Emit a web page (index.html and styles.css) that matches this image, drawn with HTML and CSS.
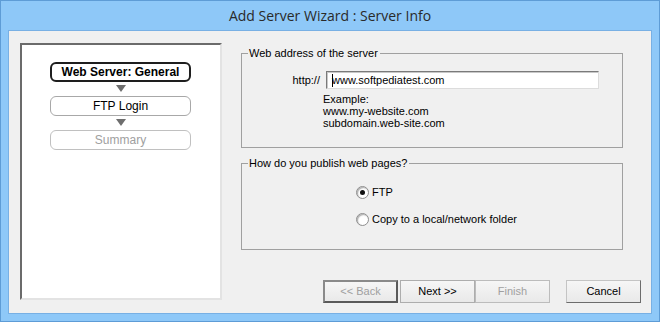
FILE: index.html
```html
<!DOCTYPE html>
<html lang="en">

<head>
    <meta charset="UTF-8">
    <title>Add Server Wizard : Server Info</title>
    <link rel="stylesheet" href="styles.css">
</head>

<body>
    <div class="window">
        <div class="titlebar">Add Server Wizard : Server Info</div>

        <div class="client">
            <!-- wizard steps -->
            <div class="steps">
                <div class="step step-active">Web Server: General</div>
                <div class="step-arrow"></div>
                <div class="step">FTP Login</div>
                <div class="step-arrow"></div>
                <div class="step step-disabled">Summary</div>
            </div>

            <div class="main">
                <fieldset class="group group-address">
                    <legend>Web address of the server</legend>
                    <div class="url-row">
                        <label class="url-label">http://</label>
                        <div class="textbox"><span class="caret"></span>www.softpediatest.com</div>
                    </div>
                    <div class="example">
                        Example:<br>
                        www.my-website.com<br>
                        subdomain.web-site.com
                    </div>
                </fieldset>

                <fieldset class="group group-publish">
                    <legend>How do you publish web pages?</legend>
                    <div class="radio-row radio-first">
                        <span class="radio radio-checked"></span>
                        <span class="radio-label">FTP</span>
                    </div>
                    <div class="radio-row">
                        <span class="radio"></span>
                        <span class="radio-label">Copy to a local/network folder</span>
                    </div>
                </fieldset>

                <div class="buttons">
                    <div class="btn btn-back">&lt;&lt; Back</div>
                    <div class="btn btn-next">Next &gt;&gt;</div>
                    <div class="btn btn-finish">Finish</div>
                    <div class="btn btn-cancel">Cancel</div>
                </div>
            </div>
        </div>
    </div>
</body>

</html>
```

FILE: styles.css
```css
* {
    margin: 0;
    padding: 0;
    box-sizing: border-box;
}

body {
    font-family: 'Liberation Sans', Arial, sans-serif;
    font-size: 11px;
    color: #000;
    background: #8ec8f8;
}

.window {
    width: 660px;
    height: 322px;
    border: 1px solid #5e9cd6;
    background: #8ec8f8;
}

.titlebar {
    height: 29px;
    line-height: 29px;
    text-align: center;
    font-family: 'Open Sans', sans-serif;
    font-size: 14px;
    color: #2a2a2a;
}

.client {
    height: 284px;
    margin: 0 7px;
    background: #f0f0f0;
    border: 1px solid #78b0e4;
    padding: 12px 0 0 11px;
    display: flex;
}

/* Steps panel */
.steps {
    width: 202px;
    height: 257px;
    background: #fff;
    border: 2px solid;
    border-color: #6b6b6b #e3e3e3 #e3e3e3 #6b6b6b;
    padding: 17px 0 0 28px;
    display: flex;
    flex-direction: column;
    align-items: flex-start;
}

.step {
    width: 141px;
    height: 20px;
    line-height: 18px;
    text-align: center;
    font-size: 12px;
    border: 1px solid #a8a8a8;
    border-radius: 6px;
    background: #fff;
}

.step-active {
    border: 2px solid #1e1e1e;
    line-height: 16px;
    font-weight: bold;
}

.step-disabled {
    color: #a0a0a0;
    border-color: #c0c0c0;
}

.step-arrow {
    width: 0;
    height: 0;
    margin: 3px 0 4px 66px;
    border-top: 7px solid #6e6e6e;
    border-left: 5px solid transparent;
    border-right: 5px solid transparent;
}

/* Right side */
.main {
    flex: 1;
    margin-left: 19px;
    padding-top: 4px;
    display: flex;
    flex-direction: column;
}

.group {
    width: 382px;
    border: 1px solid #a0a0a0;
    padding: 0;
}

.group legend {
    margin-left: 6px;
    padding: 0 2px 0 1px;
    line-height: 13px;
}

.group-address {
    height: 101px;
}

.group-publish {
    height: 93px;
    margin-top: 9px;
}

.url-row {
    display: flex;
    align-items: center;
    margin-top: 11px;
}

.url-label {
    width: 78px;
    text-align: right;
}

.textbox {
    position: relative;
    width: 273px;
    height: 18px;
    margin-left: 6px;
    background: #fff;
    border: 1px solid;
    border-color: #7a7a7a #dcdcdc #dcdcdc #7a7a7a;
    box-shadow: inset 1px 1px 0 #c8c8c8;
    padding-left: 5px;
    line-height: 16px;
}

.caret {
    position: absolute;
    left: 5px;
    top: 2px;
    width: 1px;
    height: 13px;
    background: #000;
}

.example {
    margin: 4px 0 0 81px;
    line-height: 12px;
}

.radio-row {
    display: flex;
    align-items: center;
    height: 16px;
    margin: 11px 0 0 114px;
}

.radio-first {
    margin-top: 14px;
}

.radio {
    position: relative;
    width: 13px;
    height: 13px;
    border-radius: 50%;
    border: 1px solid #8e8e8e;
    background: radial-gradient(circle at 60% 60%, #ffffff 40%, #e6e6e6 100%);
    box-shadow: inset 1px 1px 1px #b0b0b0;
}

.radio-checked::after {
    content: "";
    position: absolute;
    left: 3px;
    top: 3px;
    width: 5px;
    height: 5px;
    border-radius: 50%;
    background: #111;
}

.radio-label {
    margin-left: 3px;
}

/* Buttons */
.buttons {
    display: flex;
    margin-top: 30px;
    padding-left: 82px;
}

.btn {
    width: 75px;
    height: 23px;
    line-height: 21px;
    text-align: center;
    background: linear-gradient(#f6f6f6, #e9e9e9);
    border: 1px solid #adadad;
}

.btn-back {
    color: #a0a0a0;
    border: 2px solid;
    border-color: #8a8a8a #5a5a5a #5a5a5a #8a8a8a;
    line-height: 19px;
}

.btn-next {
    margin-left: 2px;
}

.btn-finish {
    color: #a0a0a0;
    border-color: #bcbcbc;
}

.btn-cancel {
    margin-left: 16px;
    border-color: #c4c4c4 #6c6c6c #6c6c6c #c4c4c4;
}
```
